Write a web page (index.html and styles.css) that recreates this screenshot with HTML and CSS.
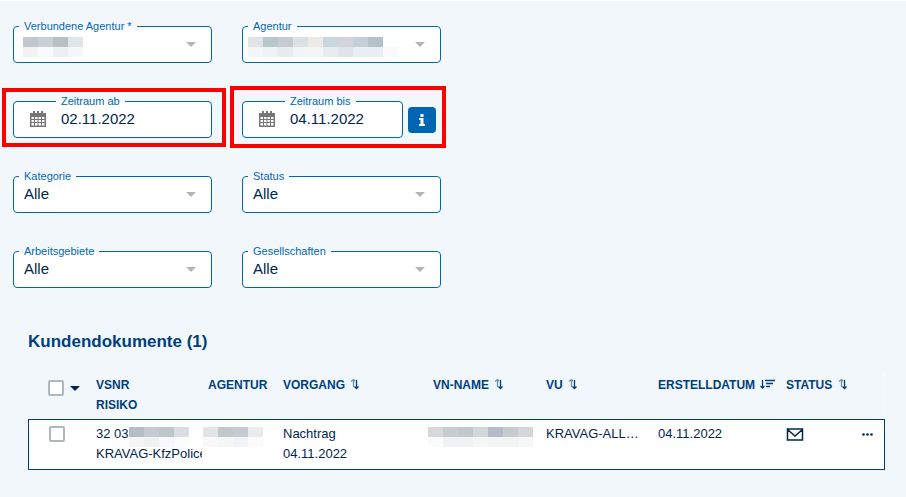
FILE: index.html
```html
<!DOCTYPE html>
<html lang="de">
  <head>
    <meta charset="UTF-8" />
    <meta name="viewport" content="width=device-width, initial-scale=1" />
    <title>Kundendokumente</title>
    <link rel="stylesheet" href="styles.css">
  </head>
  <body>
    <form class="filters">
      <fieldset class="field">
        <legend><label for="verbundene-agentur">Verbundene Agentur *</label></legend>
        <div class="control select">
          <select id="verbundene-agentur"><option></option></select>
        </div>
        <svg class="mosaic masked-value" width="60" height="20" aria-hidden="true">
          <path fill="#c2c7cf" d="M0 0h15v10H0z"/><path fill="#c8d0d6" d="M15 0h15v10H15z"/><path fill="#b8c0c6" d="M30 0h15v10H30z"/><path fill="#e0e5e9" d="M45 0h15v10H45z"/>
          <path fill="#f2f2f3" d="M0 10h15v10H0z"/><path fill="#f8fafd" d="M15 10h15v10H15z"/><path fill="#eeeff1" d="M30 10h15v10H30z"/><path fill="#f6f7f9" d="M45 10h15v10H45z"/>
        </svg>
      </fieldset>
      <fieldset class="field">
        <legend><label for="agentur">Agentur</label></legend>
        <div class="control select">
          <select id="agentur"><option></option></select>
        </div>
        <svg class="mosaic masked-value -wide" width="165" height="20" aria-hidden="true">
          <path fill="#e0e4e7" d="M0 0h15v10H0z"/><path fill="#bac7cd" d="M15 0h15v10H15z"/><path fill="#c6cbcf" d="M30 0h15v10H30z"/><path fill="#dae2e6" d="M45 0h15v10H45z"/><path fill="#ece9e7" d="M60 0h15v10H60z"/><path fill="#cad6de" d="M75 0h15v10H75z"/><path fill="#d1d4da" d="M90 0h15v10H90z"/><path fill="#c6cfd9" d="M105 0h15v10h-15z"/><path fill="#b5c1c8" d="M120 0h15v10h-15z"/><path fill="#fdfeff" d="M135 0h15v10h-15z"/>
          <path fill="#f4f5f7" d="M0 10h15v10H0z"/><path fill="#eff3f5" d="M15 10h15v10H15z"/><path fill="#e8eaee" d="M30 10h15v10H30z"/><path fill="#f1f5f6" d="M45 10h15v10H45z"/><path fill="#f4f5f4" d="M60 10h15v10H60z"/><path fill="#e8ecf0" d="M75 10h15v10H75z"/><path fill="#e0e4e8" d="M90 10h15v10H90z"/><path fill="#eaedf1" d="M105 10h30v10h-30z"/><path fill="#fafafb" d="M135 10h15v10h-15z"/><path fill="#fcfffe" d="M150 10h15v10h-15z"/>
        </svg>
      </fieldset>

      <div class="date-cell -from">
        <fieldset class="field -date">
          <legend><label for="zeitraum-ab">Zeitraum ab</label></legend>
          <div class="control">
            <svg class="calendar" viewBox="0 0 16 16" width="16" height="16" aria-hidden="true">
              <path fill-rule="evenodd" d="M0 2h16v14H0zM1.500 6v2H4V6zM5 6v2h2.500V6zM8.500 6v2H11V6zM12 6v2h2.500V6zM1.500 9v2H4V9zM5 9v2h2.500V9zM8.500 9v2H11V9zM12 9v2h2.500V9zM1.500 12v2.500H4V12zM5 12v2.500h2.500V12zM8.500 12v2.500H11V12zM12 12v2.500h2.500V12z"/>
              <path d="M3 0h2v3H3zM7 0h2v3H7zM11 0h2v3h-2z"/>
            </svg>
            <input id="zeitraum-ab" type="text" value="02.11.2022">
          </div>
        </fieldset>
      </div>
      <div class="date-cell -to">
        <fieldset class="field -date">
          <legend><label for="zeitraum-bis">Zeitraum bis</label></legend>
          <div class="control">
            <svg class="calendar" viewBox="0 0 16 16" width="16" height="16" aria-hidden="true">
              <path fill-rule="evenodd" d="M0 2h16v14H0zM1.500 6v2H4V6zM5 6v2h2.500V6zM8.500 6v2H11V6zM12 6v2h2.500V6zM1.500 9v2H4V9zM5 9v2h2.500V9zM8.500 9v2H11V9zM12 9v2h2.500V9zM1.500 12v2.500H4V12zM5 12v2.500h2.500V12zM8.500 12v2.500H11V12zM12 12v2.500h2.500V12z"/>
              <path d="M3 0h2v3H3zM7 0h2v3H7zM11 0h2v3h-2z"/>
            </svg>
            <input id="zeitraum-bis" type="text" value="04.11.2022">
          </div>
        </fieldset>
        <button type="button" class="info" aria-label="Information">
          <svg viewBox="0 0 6 12" width="6" height="12" aria-hidden="true">
            <path d="M1.500 0h3v3h-3zM0 4h4.500v6H6v2H0v-2h1.500V6H0z"/>
          </svg>
        </button>
      </div>

      <fieldset class="field">
        <legend><label for="kategorie">Kategorie</label></legend>
        <div class="control select">
          <select id="kategorie"><option>Alle</option></select>
        </div>
      </fieldset>
      <fieldset class="field">
        <legend><label for="status">Status</label></legend>
        <div class="control select">
          <select id="status"><option>Alle</option></select>
        </div>
      </fieldset>

      <fieldset class="field">
        <legend><label for="arbeitsgebiete">Arbeitsgebiete</label></legend>
        <div class="control select">
          <select id="arbeitsgebiete"><option>Alle</option></select>
        </div>
      </fieldset>
      <fieldset class="field">
        <legend><label for="gesellschaften">Gesellschaften</label></legend>
        <div class="control select">
          <select id="gesellschaften"><option>Alle</option></select>
        </div>
      </fieldset>
    </form>

    <section class="documents">
      <h2>Kundendokumente (1)</h2>
      <table>
        <colgroup>
          <col class="col-check">
          <col class="col-vsnr">
          <col class="col-agentur">
          <col class="col-vorgang">
          <col class="col-name">
          <col class="col-vu">
          <col class="col-datum">
          <col class="col-status">
          <col class="col-menu">
        </colgroup>
        <thead>
          <tr>
            <th class="check">
              <input type="checkbox" aria-label="Alle auswählen">
              <button type="button" class="pick" aria-label="Auswahl"></button>
            </th>
            <th>VSNR<br>RISIKO</th>
            <th>AGENTUR</th>
            <th>VORGANG
              <svg class="sort" viewBox="0 0 10 12" width="10" height="12" aria-hidden="true"><path class="up" d="M3.500 9V1.500M1 3.500l2.500-2L5 3"/><path d="M6.500 2v8.500M4.500 8.500l2 2 2-2"/></svg>
            </th>
            <th>VN-NAME
              <svg class="sort" viewBox="0 0 10 12" width="10" height="12" aria-hidden="true"><path class="up" d="M3.500 9V1.500M1 3.500l2.500-2L5 3"/><path d="M6.500 2v8.500M4.500 8.500l2 2 2-2"/></svg>
            </th>
            <th>VU
              <svg class="sort" viewBox="0 0 10 12" width="10" height="12" aria-hidden="true"><path class="up" d="M3.500 9V1.500M1 3.500l2.500-2L5 3"/><path d="M6.500 2v8.500M4.500 8.500l2 2 2-2"/></svg>
            </th>
            <th>ERSTELLDATUM
              <svg class="sort" viewBox="0 0 15 12" width="15" height="12" aria-hidden="true"><path d="M2.500 2v8M.5 8l2 2 2-2M5 2.500h10M6 5.500h7M6 8.500h4"/></svg>
            </th>
            <th>STATUS
              <svg class="sort" viewBox="0 0 10 12" width="10" height="12" aria-hidden="true"><path class="up" d="M3.500 9V1.500M1 3.500l2.500-2L5 3"/><path d="M6.500 2v8.500M4.500 8.500l2 2 2-2"/></svg>
            </th>
            <th></th>
          </tr>
        </thead>
        <tbody>
          <tr>
            <td class="check"><input type="checkbox" aria-label="Dokument auswählen"></td>
            <td>32 03<svg class="mosaic" width="60" height="20" aria-hidden="true">
              <path fill="#b4bcc5" d="M0 0h15v10H0z"/><path fill="#c4cad1" d="M15 0h15v10H15z"/><path fill="#bdc6c9" d="M30 0h15v10H30z"/><path fill="#d9dde5" d="M45 0h15v10H45z"/>
              <path fill="#f5f5f6" d="M0 10h15v10H0z"/><path fill="#f0f1f3" d="M15 10h15v10H15z"/><path fill="#f7f8f9" d="M30 10h15v10H30z"/><path fill="#fcfcfc" d="M45 10h15v10H45z"/>
            </svg><br>KRAVAG-KfzPolice</td>
            <td><svg class="mosaic -outdent" width="60" height="20" aria-hidden="true">
              <path fill="#e3e4e8" d="M0 0h15v10H0z"/><path fill="#c1c8ca" d="M15 0h15v10H15z"/><path fill="#c4cbd2" d="M30 0h15v10H30z"/><path fill="#e9ecee" d="M45 0h15v10H45z"/>
              <path fill="#f9f9f9" d="M0 10h15v10H0z"/><path fill="#f5f6f6" d="M15 10h15v10H15z"/><path fill="#f2f3f5" d="M30 10h15v10H30z"/><path fill="#fbfbfc" d="M45 10h15v10H45z"/>
            </svg></td>
            <td>Nachtrag<br>04.11.2022</td>
            <td><svg class="mosaic -outdent" width="105" height="20" aria-hidden="true">
              <path fill="#d8d8dc" d="M0 0h15v10H0z"/><path fill="#c6cdcf" d="M15 0h15v10H15z"/><path fill="#c2c9cc" d="M30 0h15v10H30z"/><path fill="#d2d7da" d="M45 0h15v10H45z"/><path fill="#b5bcc6" d="M60 0h15v10H60z"/><path fill="#c5ccce" d="M75 0h15v10H75z"/><path fill="#d1d7da" d="M90 0h15v10H90z"/>
              <path fill="#fbfbfb" d="M0 10h15v10H0z"/><path fill="#f1f2f4" d="M15 10h30v10H15z"/><path fill="#f6f6f7" d="M45 10h15v10H45z"/><path fill="#f2f4f4" d="M60 10h30v10H60z"/><path fill="#f7f7f8" d="M90 10h15v10H90z"/>
            </svg></td>
            <td>KRAVAG-ALL…</td>
            <td>04.11.2022</td>
            <td>
              <svg class="mail" viewBox="0 0 18 13" width="18" height="13" role="img" aria-label="Post"><path d="M1.500 1h15v11h-15zM1.500 1.500L9 8l7.500-6.500"/></svg>
            </td>
            <td>
              <button type="button" class="more" aria-label="Mehr">
                <svg viewBox="0 0 11 3" width="11" height="3" aria-hidden="true"><circle cx="1.500" cy="1.500" r="1.300"/><circle cx="5.500" cy="1.500" r="1.300"/><circle cx="9.500" cy="1.500" r="1.300"/></svg>
              </button>
            </td>
          </tr>
        </tbody>
      </table>
    </section>
  </body>
</html>
```
FILE: styles.css
```css
* {
  box-sizing: border-box;
  margin: 0;
  padding: 0;
}

body {
  border-top: 1px solid #fff;
  font-family: "Liberation Sans", Arial, Helvetica, sans-serif;
  font-size: 13px;
  line-height: 20px;
  color: #00264d;
  background-color: #f2f7fb;
}

button {
  border: 0;
  background: none;
  cursor: pointer;
}

/* filters */

.filters {
  display: grid;
  grid-template-columns: repeat(2, minmax(0, 199px));
  gap: 32px 30px;
  padding: 19px 13px 0;
}

.field {
  position: relative;
  min-width: 0;
  padding: 0 5px 6px;
  border: 1px solid #0066b3;
  border-radius: 4px;
  background-color: #fff;
}

.field legend {
  padding: 0 5px;
  font-size: 11px;
  line-height: 12px;
  color: #0066b3;
}

.field.-date legend {
  margin-left: 37px;
}

.field label {
  display: block;
}

.control {
  display: flex;
  align-items: center;
  height: 24px;
  padding: 0 10px 0 5px;
}

.control select,
.control input {
  flex: 1;
  min-width: 0;
  border: 0;
  font-family: inherit;
  font-size: 15px;
  line-height: 20px;
  color: #00264d;
  background: none;
  appearance: none;
  outline: none;
}

.select::after {
  content: "";
  border: 5px solid transparent;
  border-top-color: #b0b7bc;
  border-bottom: 0;
}

.field.-date .control {
  gap: 15px;
  padding-left: 11px;
}

.calendar {
  flex: none;
  fill: #777;
}

.date-cell {
  position: relative;
  display: flex;
  align-items: flex-end;
  gap: 5px;
}

.date-cell .field {
  flex: 1;
}

.date-cell.-to {
  padding-right: 5px;
}

/* red marker frames around the date range */
.date-cell::after {
  content: "";
  position: absolute;
  border: 4px solid #f00;
  pointer-events: none;
}

.date-cell.-from::after {
  inset: -7px -14px -9px -11px;
}

.date-cell.-to::after {
  inset: -9px -5px -10px -12px;
}

.info {
  display: flex;
  align-items: center;
  justify-content: center;
  width: 28px;
  height: 26px;
  margin-bottom: 5px;
  border-radius: 4px;
  background-color: #0066b3;
}

.info svg {
  fill: #fff;
}

/* pixelated values */

.mosaic {
  margin: 3px 0 -3px;
  vertical-align: top;
  shape-rendering: crispEdges;
}

.mosaic.-outdent {
  margin-left: -5px;
}

.masked-value {
  position: absolute;
  top: 2px;
  left: 9px;
}

.masked-value.-wide {
  left: 5px;
}

/* documents */

.documents {
  padding: 44px 21px 24px 28px;
}

h2 {
  margin-bottom: 22px;
  font-size: 17px;
  line-height: 20px;
  color: #003f7d;
}

table {
  width: 100%;
  table-layout: fixed;
  border-collapse: separate;
  border-spacing: 0;
}

.col-check { width: 68px; }
.col-vsnr { width: 112px; }
.col-agentur { width: 75px; }
.col-vorgang { width: 150px; }
.col-name { width: 113px; }
.col-vu { width: 112px; }
.col-datum { width: 128px; }
.col-status { width: 76px; }
.col-menu { width: 23px; }

th {
  padding: 1px 0 4px;
  font-size: 12px;
  text-align: left;
  vertical-align: top;
  white-space: nowrap;
  color: #003f7d;
}

th:last-child {
  border-right: 1px solid #fff;
}

tbody tr {
  outline: 1px solid #003f7d;
  outline-offset: -1px;
}

td {
  padding: 5px 0 6px;
  vertical-align: top;
  white-space: nowrap;
  background-color: #fff;
}

td:nth-child(2) {
  border-right: 6px solid #fff;
  overflow: hidden;
}

td svg:not(.mosaic) {
  vertical-align: middle;
}

.check {
  padding-left: 20px;
}

td.check {
  padding-left: 21px;
}

.check input {
  width: 16px;
  height: 16px;
  margin-top: 2px;
  border: 2px solid #b0b7bc;
  border-radius: 2px;
  vertical-align: top;
  background-color: #fff;
  appearance: none;
}

th.check input {
  margin-top: 5px;
}

.pick {
  margin: 11px 0 0 3px;
  border: 5px solid transparent;
  border-top-color: #00264d;
  border-bottom: 0;
  vertical-align: top;
}

.sort {
  margin-left: 2px;
  vertical-align: -1px;
  fill: none;
  stroke: #003f7d;
  stroke-width: 1.3;
}

.sort .up {
  stroke: #6c8cab;
}

.mail {
  fill: none;
  stroke: #00264d;
  stroke-width: 1.5;
}

.more {
  display: block;
  height: 20px;
}

.more svg {
  display: block;
  fill: #00264d;
}
```
